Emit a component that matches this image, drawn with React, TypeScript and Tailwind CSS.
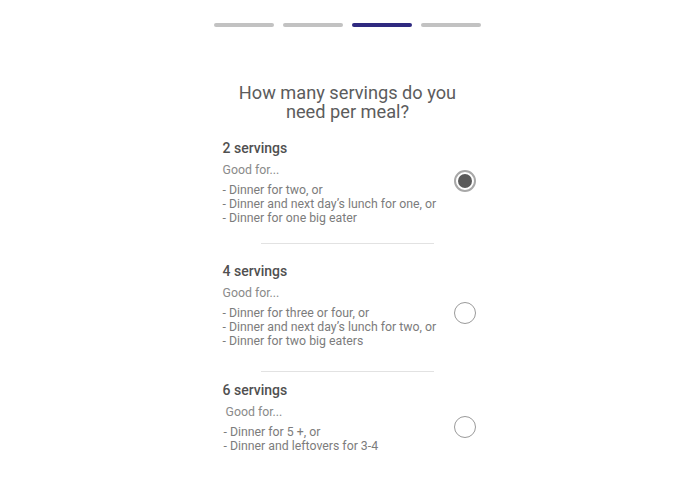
import React from "react";

type Opt = {
  title: string;
  good: string;
  lines: string[];
  selected?: boolean;
  topGap: string;
  radioOffset: string;
  goodIndent?: string;
};

function Radio({ selected }: { selected?: boolean }) {
  if (selected) {
    return (
      <div className="w-[22px] h-[22px] rounded-full border-2 border-[#a8a8a8] flex items-center justify-center">
        <div className="w-[14px] h-[14px] rounded-full bg-[#5a5a5a]" />
      </div>
    );
  }
  return <div className="w-[22px] h-[22px] rounded-full border-[1.5px] border-[#9a9a9a]" />;
}

function Option({ o }: { o: Opt }) {
  return (
    <div className={`flex ${o.topGap}`}>
      <div className="flex-1">
        <div className="text-[14px] leading-[20px] font-medium text-[#505050]">{o.title}</div>
        <div className={`mt-[2px] text-[12.3px] leading-[20px] text-[#8a8a8a] ${o.goodIndent ?? ""}`}>{o.good}</div>
        <div className={`mt-[3px] text-[12.3px] leading-[14px] text-[#7c7c7c] ${o.goodIndent ? "pl-[1px]" : ""}`}>
          {o.lines.map((l) => (
            <div key={l}>{l}</div>
          ))}
        </div>
      </div>
      <div className={o.radioOffset}>
        <Radio selected={o.selected} />
      </div>
    </div>
  );
}

export default function App() {
  return (
    <div
      className="w-[695px] h-[494px] bg-white overflow-hidden"
      style={{ fontFamily: "Roboto, 'Noto Sans', sans-serif" }}
    >
      <div className="flex justify-center gap-[9px] pt-[23px]">
        <div className="w-[60px] h-[4px] rounded-full bg-[#c2c2c2]" />
        <div className="w-[60px] h-[4px] rounded-full bg-[#c2c2c2]" />
        <div className="w-[60px] h-[4px] rounded-full bg-[#2f2a80]" />
        <div className="w-[60px] h-[4px] rounded-full bg-[#c2c2c2]" />
      </div>

      <div className="mt-[56px] text-center text-[18.2px] leading-[19px] font-normal text-[#5c5c5c]">
        How many servings do you
        <br />
        need per meal?
      </div>

      <div className="w-[256px] mx-auto mt-[17px] pl-[3px]">
        <Option
          o={{
            title: "2 servings",
            good: "Good for...",
            lines: [
              "- Dinner for two, or",
              "- Dinner and next day\u2019s lunch for one, or",
              "- Dinner for one big eater",
            ],
            selected: true,
            topGap: "",
            radioOffset: "mt-[32px]",
          }}
        />
      </div>
      <div className="w-[173px] mx-auto mt-[18px] h-px bg-[#e2e2e2]" />
      <div className="w-[256px] mx-auto pl-[3px]">
        <Option
          o={{
            title: "4 servings",
            good: "Good for...",
            lines: [
              "- Dinner for three or four, or",
              "- Dinner and next day\u2019s lunch for two, or",
              "- Dinner for two big eaters",
            ],
            topGap: "mt-[17px]",
            radioOffset: "mt-[41px]",
          }}
        />
      </div>
      <div className="w-[173px] mx-auto mt-[23px] h-px bg-[#e2e2e2]" />
      <div className="w-[256px] mx-auto pl-[3px]">
        <Option
          o={{
            title: "6 servings",
            good: "Good for...",
            lines: ["- Dinner for 5 +, or", "- Dinner and leftovers for 3-4"],
            topGap: "mt-[8px]",
            radioOffset: "mt-[36px]",
            goodIndent: "pl-[3px]",
          }}
        />
      </div>
    </div>
  );
}
